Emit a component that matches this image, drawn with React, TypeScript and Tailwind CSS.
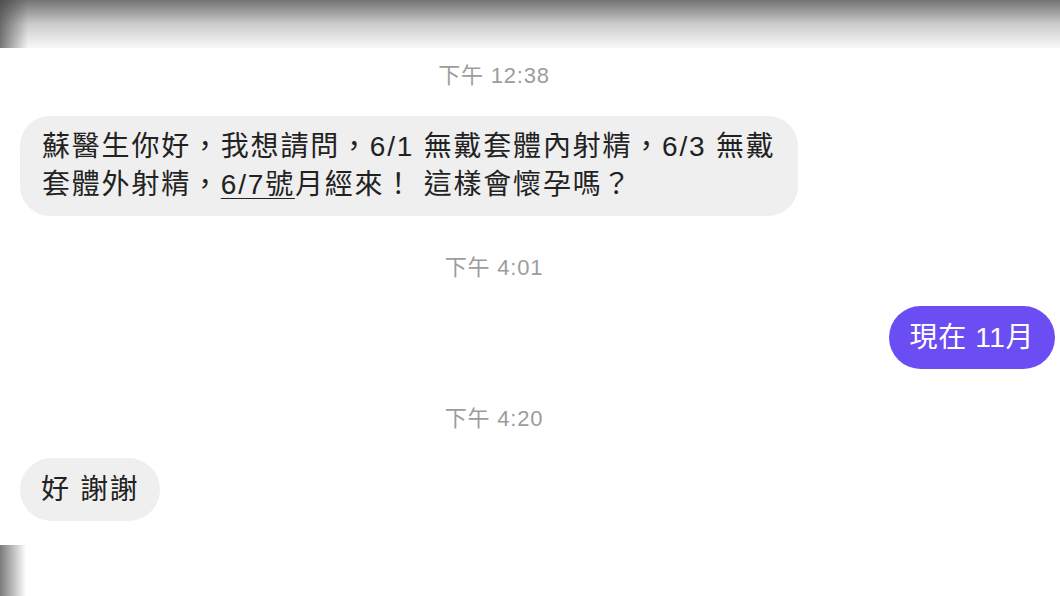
import React from 'react'

const font = { fontFamily: '"Liberation Sans", "Noto Sans CJK TC", sans-serif' }

const Stamp = ({ text }: { text: string }) => (
    <div className="flex h-[30px] items-center justify-center pr-[72px] text-[22px] tracking-[0.8px] text-[#9d9d9d]">{text}</div>
)

const App = () => {
    return (
        <div className="relative flex h-[596px] w-[1060px] flex-col overflow-hidden bg-white" style={font}>
            <div className="relative h-[48px] shrink-0 bg-gradient-to-b from-[#747474] via-[#cbcbcb] to-[#f8f8f8]">
                <div className="absolute inset-y-0 left-0 w-[28px] bg-gradient-to-r from-[#3f3f3f]/70 to-transparent"></div>
            </div>

            <div className="mt-[12px]">
                <Stamp text="下午 12:38" />
            </div>

            <div className="mt-[26px] flex pl-[20px]">
                <div className="h-[100px] rounded-[30px] bg-[#efefef] px-[22px] pt-[12px] text-[28px] leading-[38px] tracking-[1.8px] text-[#222]">
                    蘇醫生你好，我想請問，6/1 無戴套體內射精，6/3 無戴
                    <br />
                    套體外射精，<span className="underline decoration-1 underline-offset-4">6/7號</span>月經來！ 這樣會懷孕嗎？
                </div>
            </div>

            <div className="mt-[36px]">
                <Stamp text="下午 4:01" />
            </div>

            <div className="mt-[24px] flex justify-end pr-[5px]">
                <div className="flex h-[63px] items-center rounded-full bg-[#6b4ef3] px-[21px] text-[28px] tracking-[0.6px] text-white">
                    現在 11月
                </div>
            </div>

            <div className="mt-[34px]">
                <Stamp text="下午 4:20" />
            </div>

            <div className="mt-[25px] flex pl-[20px]">
                <div className="flex h-[63px] items-center rounded-full bg-[#efefef] px-[21px] text-[28px] tracking-[1.6px] text-[#222]">
                    好 謝謝
                </div>
            </div>

            <div className="flex-1"></div>
            <div className="relative h-[51px] shrink-0 bg-white">
                <div className="absolute inset-y-0 left-0 w-[26px] bg-gradient-to-r from-[#7a7a7a] to-transparent"></div>
            </div>
        </div>
    )
}

export default App
